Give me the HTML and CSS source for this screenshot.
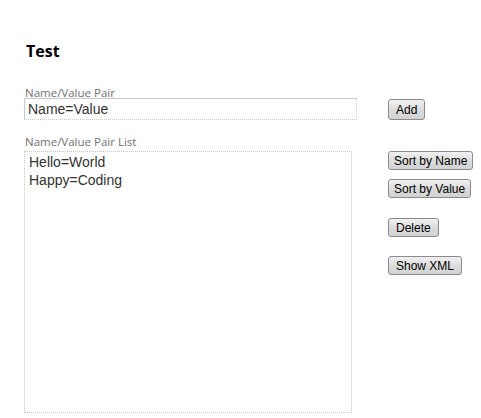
FILE: index.html
```html
<!DOCTYPE html>
<html>
<head>
<meta charset="utf-8">
<link rel="stylesheet" href="styles.css">
</head>
<body>
<div class="page">
  <h1 class="title">Test</h1>
  <div class="row row-input">
    <div class="field">
      <label class="label">Name/Value Pair</label>
      <div class="input">Name=Value</div>
    </div>
    <div class="actions actions-add">
      <button class="btn btn-add">Add</button>
    </div>
  </div>
  <div class="row row-list">
    <div class="field">
      <label class="label">Name/Value Pair List</label>
      <div class="list">
        <div class="item">Hello=World</div>
        <div class="item">Happy=Coding</div>
      </div>
    </div>
    <div class="actions actions-list">
      <button class="btn btn-narrow">Sort by Name</button>
      <button class="btn btn-narrow btn-gap">Sort by Value</button>
      <button class="btn btn-gap">Delete</button>
      <button class="btn">Show XML</button>
    </div>
  </div>
</div>
</body>
</html>
```
FILE: styles.css
```css
html, body {
  margin: 0;
  padding: 0;
  background: #fff;
}
.page {
  padding: 0 0 0 24px;
  font-family: "Liberation Sans", Arial, sans-serif;
}
.title {
  margin: 0;
  padding: 40px 0 0 2px;
  font-family: "Open Sans", "DejaVu Sans", sans-serif;
  font-weight: bold;
  font-size: 16px;
  line-height: 22px;
  color: #000;
}
.row {
  display: flex;
}
.field {
  display: flex;
  flex-direction: column;
}
.label {
  font-family: "Open Sans", sans-serif;
  font-size: 11.5px;
  line-height: 12px;
  color: #707070;
  padding-left: 1px;
}
.row-input {
  margin-top: 25px;
  height: 49px;
}
.input {
  width: 328px;
  height: 20px;
  border: 1px solid #c8ccc8;
  border-bottom-style: dotted;
  border-right-style: dotted;
  font-size: 14px;
  line-height: 20px;
  color: #333;
  padding-left: 3px;
  margin-top: -1px;
}
.actions {
  display: flex;
  flex-direction: column;
  align-items: flex-start;
  margin-left: 31px;
}
.actions-add {
  padding-top: 12px;
}
.list {
  width: 322px;
  height: 259px;
  border: 1px dotted #c8c4cc;
  padding: 1px 0 0 4px;
  box-sizing: content-box;
  margin-top: 3px;
  font-size: 14px;
  line-height: 18px;
  color: #333;
}
.actions-list {
  padding-top: 15px;
  margin-left: 36px;
}
.btn {
  font-family: "Liberation Sans", Arial, sans-serif;
  font-size: 12px;
  line-height: 16px;
  height: 19px;
  padding: 0 7px;
  border: 1px solid #8c8890;
  border-radius: 3px;
  background: linear-gradient(#f2f2f2, #dcdcdc 50%, #d2d2d2);
  color: #000;
  margin: 0 0 9px 0;
}
.btn-add {
  height: 21px;
}
.btn-narrow {
  padding: 0 5px;
}
.btn-gap {
  margin-bottom: 19px;
}
.btn-narrow.btn-gap {
  margin-bottom: 20px;
}
```
